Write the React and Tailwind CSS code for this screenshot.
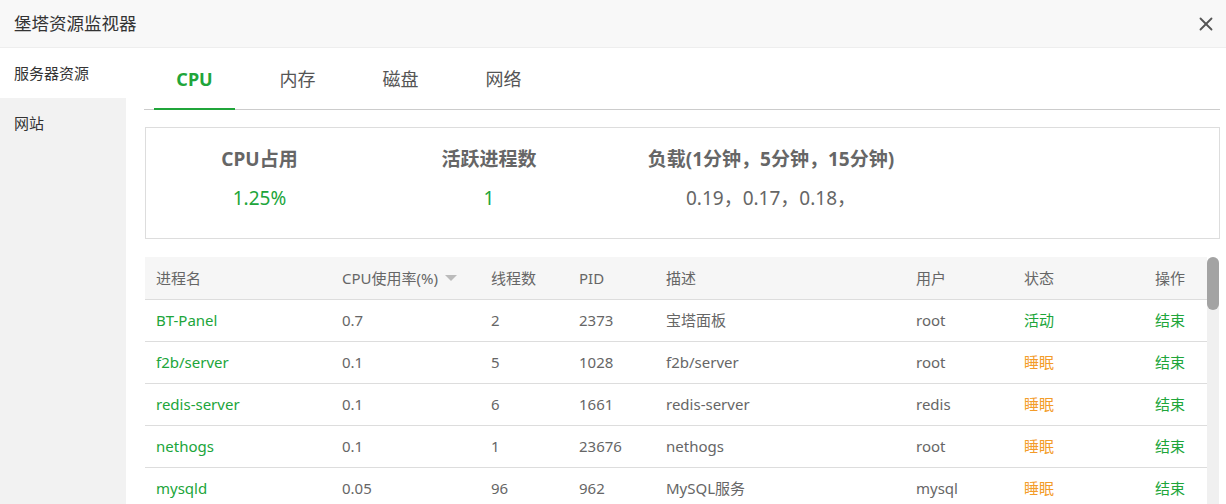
import { X } from 'lucide-react';

const font = { fontFamily: '"Noto Sans", "Noto Sans CJK SC", sans-serif' };

const rows = [
  ['BT-Panel', '0.7', '2', '2373', '宝塔面板', 'root', '活动'],
  ['f2b/server', '0.1', '5', '1028', 'f2b/server', 'root', '睡眠'],
  ['redis-server', '0.1', '6', '1661', 'redis-server', 'redis', '睡眠'],
  ['nethogs', '0.1', '1', '23676', 'nethogs', 'root', '睡眠'],
  ['mysqld', '0.05', '96', '962', 'MySQL服务', 'mysql', '睡眠'],
];

const tabs = ['CPU', '内存', '磁盘', '网络'];

const App = () => {
  return (
    <div className="w-[1226px] h-[504px] overflow-hidden bg-white text-[#666]" style={font}>
      <div className="h-[48px] bg-[#f8f8f8] border-b border-[#eee] flex items-center justify-between pl-[14px] pr-[9px]">
        <span className="text-[17.5px] text-[#333]">堡塔资源监视器</span>
        <X size={22} strokeWidth={2} className="text-[#555]" />
      </div>

      <div className="flex h-[456px]">
        <div className="w-[126px] bg-[#f2f2f2] shrink-0">
          <div className="h-[50px] bg-white flex items-center pl-[14px] text-[15px] text-[#333]">服务器资源</div>
          <div className="h-[50px] flex items-center pl-[14px] text-[15px] text-[#333]">网站</div>
        </div>

        <div className="flex-1 pl-[18px] pr-[6px]">
          <div className="h-[62px] border-b border-[#ccc] flex pl-[10px] gap-[22px]">
            {tabs.map((t, i) => (
              <div
                key={t}
                className={
                  i === 0
                    ? 'w-[81px] flex items-center justify-center text-[18px] font-bold text-[#20a53a] border-b-2 border-[#20a53a] pt-[2px] -mb-px'
                    : 'w-[81px] flex items-center justify-center text-[18px] text-[#555] pt-[2px]'
                }
              >
                {t}
              </div>
            ))}
          </div>

          <div className="mt-[17px] ml-px h-[112px] border border-[#ddd] flex">
            <div className="w-[227px] flex flex-col items-center pt-[17px]">
              <span className="text-[19px] font-bold">CPU占用</span>
              <span className="text-[19px] text-[#20a53a] mt-[10px]">1.25%</span>
            </div>
            <div className="w-[232px] flex flex-col items-center pt-[17px]">
              <span className="text-[19px] font-bold">活跃进程数</span>
              <span className="text-[19px] text-[#20a53a] mt-[10px]">1</span>
            </div>
            <div className="w-[332px] flex flex-col items-center pt-[17px]">
              <span className="text-[19px] font-bold">负载(1分钟，5分钟，15分钟)</span>
              <span className="text-[19px] mt-[10px]">0.19，0.17，0.18，</span>
            </div>
          </div>

          <div className="mt-[18px] ml-px flex items-start">
            <table className="w-[1062px] text-[15px] border-collapse">
              <thead>
                <tr className="h-[42px] bg-[#f6f6f6] border-b border-[#ddd] text-left">
                  <th className="w-[186px] pl-[11px] font-normal">进程名</th>
                  <th className="w-[149px] pl-[11px] font-normal">
                    <span className="inline-flex items-center gap-[6px]">
                      CPU使用率(%)
                      <svg width="14" height="8" viewBox="0 0 14 8"><path d="M1 1h12L7 7z" fill="#bbb" /></svg>
                    </span>
                  </th>
                  <th className="w-[88px] pl-[11px] font-normal">线程数</th>
                  <th className="w-[87px] pl-[11px] font-normal">PID</th>
                  <th className="w-[250px] pl-[11px] font-normal">描述</th>
                  <th className="w-[108px] pl-[11px] font-normal">用户</th>
                  <th className="pl-[11px] font-normal">状态</th>
                  <th className="pr-[22px] font-normal text-right">操作</th>
                </tr>
              </thead>
              <tbody>
                {rows.map((r) => (
                  <tr key={r[0]} className="h-[42px] border-b border-[#ddd]">
                    <td className="pl-[11px] text-[#20a53a]">{r[0]}</td>
                    <td className="pl-[11px]">{r[1]}</td>
                    <td className="pl-[11px]">{r[2]}</td>
                    <td className="pl-[11px]">{r[3]}</td>
                    <td className="pl-[11px]">{r[4]}</td>
                    <td className="pl-[11px]">{r[5]}</td>
                    <td className={r[6] === '活动' ? 'pl-[11px] text-[#20a53a]' : 'pl-[11px] text-[#f39c29]'}>{r[6]}</td>
                    <td className="pr-[22px] text-right text-[#20a53a]">结束</td>
                  </tr>
                ))}
              </tbody>
            </table>
            <div className="w-[12px] h-[260px] bg-[#f0f0f0] rounded-t-[6px]">
              <div className="h-[53px] bg-[#a3a3a3] rounded-[6px]" />
            </div>
          </div>
        </div>
      </div>
    </div>
  );
};

export default App;
